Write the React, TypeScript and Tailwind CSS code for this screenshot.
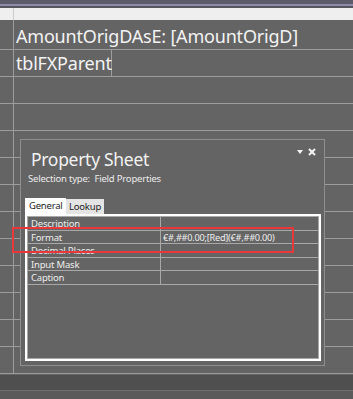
import React from 'react';

const propRows = [
  { name: 'Description', value: '' },
  { name: 'Format', value: '€#,##0.00;[Red](€#,##0.00)' },
  { name: 'Decimal Places', value: '' },
  { name: 'Input Mask', value: '' },
  { name: 'Caption', value: '' },
];

const GridRow = ({ first, children }: { first?: boolean; children?: React.ReactNode }) => (
  <div
    className={
      'flex shrink-0 border-b border-[#9c9c9c] ' + (first ? 'h-[30px]' : 'h-[27px]')
    }
  >
    <div className="w-[14px] shrink-0 border-r border-[#9c9c9c]" />
    <div className="flex-1 flex items-stretch">{children}</div>
  </div>
);

const PropertySheet = () => (
  <div className="absolute left-[20px] top-[139px] w-[305px] h-[227px] border border-[#8e8e8e] bg-[#646464] flex flex-col">
    <div className="flex items-start justify-between pl-[10px] pr-[8px] pt-[7px] h-[32px]">
      <span className="text-[17.5px] leading-[24px] tracking-[-0.3px] text-[#f2f2f2]">Property Sheet</span>
      <div className="flex items-center gap-[5px] pt-[1px]">
        <svg width="6" height="4" viewBox="0 0 6 4">
          <path d="M0 0 L6 0 L3 4 Z" fill="#f4f4f4" />
        </svg>
        <svg width="8" height="8" viewBox="0 0 8 8">
          <path d="M1 1 L7 7 M7 1 L1 7" stroke="#f4f4f4" strokeWidth="2" />
        </svg>
      </div>
    </div>
    <div className="pl-[7px] text-[9.5px] leading-[14px] tracking-[-0.2px] text-[#ececec]">
      Selection type:&nbsp; Field Properties
    </div>
    <div className="flex items-end pl-[4px] mt-[11px] h-[17px]">
      <div className="h-[16px] w-[41px] bg-white text-[#222] text-[9.5px] leading-[15px] tracking-[-0.2px] pl-[4px]">
        General
      </div>
      <div className="h-[15px] w-[38px] bg-[#e4e4e4] text-[#222] text-[9.5px] leading-[16px] tracking-[-0.2px] pl-[3px]">
        Lookup
      </div>
    </div>
    <div className="ml-[4px] mr-[3px] flex-1 mb-[4px] border-2 border-white flex flex-col">
      <div className="flex-1 border border-[#a8a8a8] flex flex-col">
        {propRows.map((r) => (
          <div key={r.name} className="flex h-[13.6px] border-b border-[#a8a8a8] overflow-hidden shrink-0">
            <div className="w-[133px] shrink-0 border-r border-[#a8a8a8] pl-[3px] text-[9.5px] leading-[14px] tracking-[-0.2px] text-[#ededed] whitespace-nowrap overflow-hidden">
              {r.name}
            </div>
            <div className="flex-1 pl-[2px] text-[9.2px] leading-[14px] tracking-[-0.25px] text-[#ededed] whitespace-nowrap overflow-hidden">
              {r.value}
            </div>
          </div>
        ))}
      </div>
    </div>
  </div>
);

export default function App() {
  const rows = Array.from({ length: 11 });
  return (
    <div className="relative w-[353px] h-[399px] overflow-hidden bg-[#646464] flex flex-col font-['Noto_Sans',sans-serif]">
      <div className="h-[4px] shrink-0 bg-[#5c5b69]" />
      <div className="h-[2px] shrink-0 bg-[#8f8cab]" />
      <div className="h-[2px] shrink-0 bg-[#55555c]" />
      <div className="h-[12px] shrink-0 bg-[#efefef] flex">
        <div className="w-[14px] border-r border-[#cdcdcd]" />
      </div>
      <div className="flex-1 flex flex-col overflow-hidden">
        <GridRow first>
          <span className="pl-[2px] pt-[3px] text-[18px] leading-[26px] tracking-[-0.2px] text-[#f3f3f3] whitespace-nowrap">
            AmountOrigDAsE: [AmountOrigD]
          </span>
        </GridRow>
        <GridRow>
          <div className="w-[98px] border-r border-[#9c9c9c] pl-[2px] text-[18px] leading-[26px] tracking-[-0.2px] text-[#f3f3f3] whitespace-nowrap">
            tblFXParent
          </div>
        </GridRow>
        {rows.map((_, i) => (
          <GridRow key={i} />
        ))}
      </div>
      <div className="h-[15px] shrink-0 bg-[#4f4f4f]" />
      <div className="h-px shrink-0 bg-[#6e6e6e]" />
      <div className="h-[8px] shrink-0 bg-[#5a5a5a]" />

      <PropertySheet />

      <div className="absolute left-[12px] top-[227px] w-[282px] h-[26px] border-2 border-[#e8383b]" />
    </div>
  );
}
